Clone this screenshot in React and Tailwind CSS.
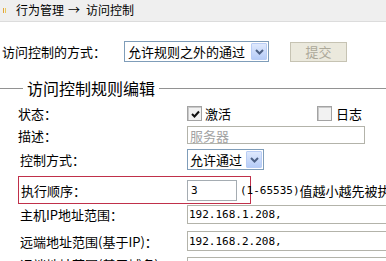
export default function App() {
  const mono = "font-['DejaVu_Sans_Mono',monospace] text-[11px]";
  const Chevron = () => (
    <div className="w-[16px] h-[17px] shrink-0 border border-[#b9cdf5] bg-gradient-to-b from-[#dfe9fd] to-[#b6ccf7] flex items-center justify-center rounded-[1px]">
      <svg width="9" height="6" viewBox="0 0 9 6">
        <polyline points="1,1 4.5,4.5 8,1" fill="none" stroke="#4d6185" strokeWidth="2" />
      </svg>
    </div>
  );
  const Box = ({ checked }) => (
    <div className="w-[15px] h-[15px] shrink-0 border border-[#a3a3a3] bg-[#f2f2f2] flex items-center justify-center">
      <div className="w-[13px] h-[13px] border-t border-l border-[#c9c9c9] flex items-center justify-center">
        {checked && (
          <svg width="9" height="8" viewBox="0 0 9 8">
            <polyline points="1,4 3.5,6.5 8,1.5" fill="none" stroke="#111" strokeWidth="2" />
          </svg>
        )}
      </div>
    </div>
  );
  return (
    <div className="w-[386px] h-[261px] overflow-hidden bg-white text-black font-['Noto_Sans_CJK_SC',sans-serif] text-[13px] leading-none">
      <div className="h-[22px] bg-[#efefef] border-b border-[#dcdcdc] flex items-center pb-[2px] text-[12px]">
        <div className="ml-[3px] flex gap-[1px] h-[5px] mt-[2px]">
          <span className="w-[1px] bg-[#e3a43a]" />
          <span className="w-[1px] bg-[#e8c858]" />
        </div>
        <span className="ml-[10px]">行为管理</span>
        <span className="ml-[4px]">→</span>
        <span className="ml-[6px]">访问控制</span>
      </div>

      <div className="mt-[19px] h-[21px] flex items-center">
        <div className="w-[124px] pl-[2px] whitespace-nowrap">访问控制的方式：</div>
        <div className="w-[145px] h-[21px] border border-[#7f9db9] flex items-center justify-between pl-[3px] pr-[1px]">
          <span className="whitespace-nowrap">允许规则之外的通过</span>
          <Chevron />
        </div>
        <div className="ml-[21px] w-[57px] h-[20px] border border-[#c6c3b3] bg-[#ebe9dd] flex items-center justify-center text-[#aca899]">
          提交
        </div>
      </div>

      <div className="mt-[16px] h-[20px] flex items-center">
        <div className="w-[23px] h-px bg-[#929292]" />
        <span className="px-[4px] text-[16px] whitespace-nowrap">访问控制规则编辑</span>
        <div className="flex-1 h-px bg-[#929292]" />
      </div>

      <div className="mt-[5px] h-[20px] flex items-center">
        <div className="w-[187px] pl-[18px]">状态：</div>
        <div className="w-[130px] flex items-center">
          <Box checked />
          <span className="ml-[3px]">激活</span>
        </div>
        <Box />
        <span className="ml-[4px]">日志</span>
      </div>

      <div className="mt-[1px] h-[22px] flex items-center">
        <div className="w-[187px] pl-[18px]">描述：</div>
        <div className="w-[178px] h-[18px] border border-[#b3b3aa] flex items-center pl-[2px] text-[#a3a3a3]">服务器</div>
      </div>

      <div className="h-[27px] flex items-center">
        <div className="w-[187px] pl-[20px]">控制方式：</div>
        <div className="w-[77px] h-[21px] border border-[#7f9db9] flex items-center justify-between pl-[2px] pr-[1px]">
          <span className="whitespace-nowrap">允许通过</span>
          <Chevron />
        </div>
      </div>

      <div className="mt-[3px] ml-[18px] w-[233px] h-[28px] border border-[#c0304a] flex items-center">
        <div className="w-[168px] shrink-0 pl-[2px]">执行顺序：</div>
        <div className={`w-[50px] h-[21px] shrink-0 border border-[#a5acb2] flex items-center pl-[3px] ${mono}`}>3</div>
        <div className="ml-[3px] shrink-0 whitespace-nowrap flex items-center">
          <span className={mono}>(1-65535)</span>
          <span>值越小越先被执行</span>
        </div>
      </div>

      <div className="mt-[1px] h-[19px] flex items-center">
        <div className="w-[187px] shrink-0 pl-[20px] whitespace-nowrap">主机IP地址范围：</div>
        <div className={`w-[220px] shrink-0 h-[19px] border border-[#b3b3aa] flex items-center pl-[1px] ${mono}`}>192.168.1.208,</div>
      </div>

      <div className="mt-[7px] h-[20px] flex items-center">
        <div className="w-[187px] shrink-0 pl-[20px] whitespace-nowrap">远端地址范围(基于IP)：</div>
        <div className={`w-[220px] shrink-0 h-[20px] border border-[#b3b3aa] flex items-center pl-[1px] ${mono}`}>192.168.2.208,</div>
      </div>

      <div className="mt-[6px] h-[20px] flex items-start">
        <div className="w-[187px] shrink-0 pl-[20px] pt-[1px] whitespace-nowrap">远端地址范围(基于域名)：</div>
        <div className="w-[220px] shrink-0 h-[20px] border border-[#b3b3aa]" />
      </div>
    </div>
  );
}
